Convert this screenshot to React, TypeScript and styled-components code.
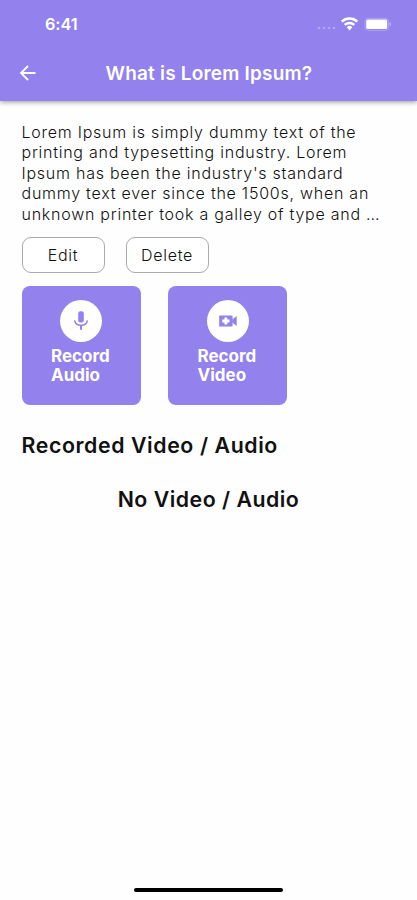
import React from "react";
import styled, { createGlobalStyle } from "styled-components";

const PURPLE = "#9381ee";

const GlobalStyle = createGlobalStyle`
  * { box-sizing: border-box; }
  body { margin: 0; background: #fff; }
  button { font: inherit; letter-spacing: inherit; color: inherit; padding: 0; }
`;

const Screen = styled.div`
  width: 417px;
  height: 900px;
  display: flex;
  flex-direction: column;
  overflow: hidden;
  background: #fefefe;
  color: #111;
  font-family: Inter, "Liberation Sans", sans-serif;
`;

const Header = styled.header`
  flex: none;
  height: 100.5px;
  background: ${PURPLE};
  color: #fff;
  box-shadow: 0 1px 5px rgba(0, 0, 0, 0.42);
`;

const StatusBar = styled.div`
  height: 48px;
  display: flex;
  align-items: center;
  justify-content: space-between;
  padding: 0 26px 0 45px;
`;

const Time = styled.span`
  font-size: 16.3px;
  font-weight: 600;
  line-height: 20px;
  letter-spacing: -0.1px;
`;

const StatusIcons = styled.div`
  display: flex;
  align-items: center;
`;

const NavBar = styled.div`
  height: 52px;
  display: grid;
  grid-template-columns: 56px 306px 55px;
  align-items: center;
  padding-bottom: 2px;
`;

const BackButton = styled.button`
  width: 20px;
  height: 20px;
  margin-left: 18px;
  border: 0;
  background: none;
  display: flex;
`;

const Title = styled.h1`
  margin: 0;
  padding-top: 2px;
  text-align: center;
  font-size: 19px;
  font-weight: 600;
  line-height: 24px;
  letter-spacing: 0.2px;
  white-space: nowrap;
`;

const Content = styled.main`
  flex: 1;
  padding: 21px 21.5px 0;
`;

const Description = styled.p`
  margin: 0;
  color: #111;
  font-size: 16px;
  font-weight: 350;
  line-height: 20.5px;
  letter-spacing: 0.75px;
  white-space: nowrap;
`;

const Line = styled.span`
  display: block;
`;

const Actions = styled.div`
  display: flex;
  gap: 21px;
  margin-top: 13px;
`;

const ActionButton = styled.button`
  width: 83px;
  height: 36px;
  border: 1px solid #aaa;
  border-radius: 9px;
  background: #fff;
  color: #111;
  font-size: 16px;
  font-weight: 350;
  letter-spacing: 0.7px;
`;

const Cards = styled.div`
  display: flex;
  gap: 27.5px;
  margin-top: 13px;
`;

const Card = styled.button`
  width: 119px;
  height: 119px;
  border: 0;
  border-radius: 8px;
  background: ${PURPLE};
  color: #fff;
  display: flex;
  flex-direction: column;
  align-items: center;
  padding-top: 13.5px;
`;

const IconCircle = styled.span`
  flex: none;
  width: 42px;
  height: 42px;
  border-radius: 50%;
  background: #fff;
  color: ${PURPLE};
  display: flex;
  align-items: center;
  justify-content: center;
`;

const CardLabel = styled.span`
  width: 60px;
  margin-top: 5px;
  text-align: left;
  font-size: 17px;
  font-weight: 700;
  line-height: 19.5px;
`;

const SectionTitle = styled.h2`
  margin: 25.5px 0 0;
  font-size: 21.3px;
  font-weight: 600;
  line-height: 28px;
  letter-spacing: 0.6px;
  white-space: nowrap;
`;

const EmptyMessage = styled.p`
  margin: 26px 0 0;
  text-align: center;
  font-size: 21.3px;
  font-weight: 600;
  line-height: 28px;
  letter-spacing: 0.5px;
`;

const HomeIndicator = styled.div`
  flex: none;
  width: 149px;
  height: 4px;
  margin: 0 auto 8px;
  border-radius: 2px;
  background: #000;
`;

const lines = [
  "Lorem Ipsum is simply dummy text of the",
  "printing and typesetting industry. Lorem",
  "Ipsum has been the industry's standard",
  "dummy text ever since the 1500s, when an",
  "unknown printer took a galley of type and …",
];

const BackIcon = () => (
  <svg width="20" height="20" viewBox="0 0 20 20" fill="none" stroke="#fff" strokeWidth="1.8">
    <path d="M17.500 10H3.500M10 3L3 10l7 7" />
  </svg>
);

const StatusGlyphs = () => (
  <svg width="75" height="16" viewBox="0 0 75 16" fill="#fff">
    <g opacity="0.3">
      <circle cx="3" cy="12" r="1.3" />
      <circle cx="8" cy="12" r="1.3" />
      <circle cx="13" cy="12" r="1.3" />
      <circle cx="18" cy="12" r="1.3" />
    </g>
    <g fill="none" stroke="#fff" strokeWidth="2.5">
      <path d="M25.700 5.600a11.300 11.300 0 0 1 15.600 0" />
      <path d="M28.700 8.900a7.100 7.100 0 0 1 9.600 0" />
    </g>
    <path d="M30.700 11.200a4 4 0 0 1 5.600 0L33.500 14.400z" />
    <rect x="49" y="2.300" width="23.500" height="12" rx="3" fill="none" stroke="#fff" strokeOpacity="0.25" />
    <rect x="50.200" y="3.500" width="21" height="9.600" rx="1.500" />
    <path d="M73.500 6.300c2.200 .5 2.200 3.500 0 4z" opacity="0.4" />
  </svg>
);

const MicIcon = () => (
  <svg width="22" height="22" viewBox="0 0 22 22" fill="none" stroke="currentColor">
    <rect x="8.200" y="1.200" width="5.600" height="11.200" rx="2.200" fill="currentColor" stroke="none" />
    <path d="M4.600 10.300c.5 3.200 3 5 6.400 5s5.900-1.800 6.400-5" strokeWidth="1.500" />
    <path d="M11 15.200v4.600" strokeWidth="2" />
  </svg>
);

const VideoIcon = () => (
  <svg width="22" height="22" viewBox="0 0 22 22" fill="currentColor">
    <path fillRule="evenodd" d="M2.200 5.400h12.400a1 1 0 0 1 1 1v9.200a1 1 0 0 1-1 1H2.200zM7.400 7.500v2.100H5.200v2.800h2.200v2.100h2.900v-2.100h2.200V9.600h-2.200V7.500z" />
    <path d="M15.200 9.500L19.700 6v10l-4.500-3.500z" />
  </svg>
);

export default function App() {
  return (
    <>
      <GlobalStyle />
      <Screen>
        <Header>
          <StatusBar>
            <Time>6:41</Time>
            <StatusIcons>
              <StatusGlyphs />
            </StatusIcons>
          </StatusBar>
          <NavBar>
            <BackButton aria-label="Back">
              <BackIcon />
            </BackButton>
            <Title>What is Lorem Ipsum?</Title>
          </NavBar>
        </Header>
        <Content>
          <Description>
            {lines.map((line) => (
              <Line key={line}>{line}</Line>
            ))}
          </Description>
          <Actions>
            <ActionButton>Edit</ActionButton>
            <ActionButton>Delete</ActionButton>
          </Actions>
          <Cards>
            <Card>
              <IconCircle>
                <MicIcon />
              </IconCircle>
              <CardLabel>Record Audio</CardLabel>
            </Card>
            <Card>
              <IconCircle>
                <VideoIcon />
              </IconCircle>
              <CardLabel>Record Video</CardLabel>
            </Card>
          </Cards>
          <SectionTitle>Recorded Video / Audio</SectionTitle>
          <EmptyMessage>No Video / Audio</EmptyMessage>
        </Content>
        <HomeIndicator />
      </Screen>
    </>
  );
}
